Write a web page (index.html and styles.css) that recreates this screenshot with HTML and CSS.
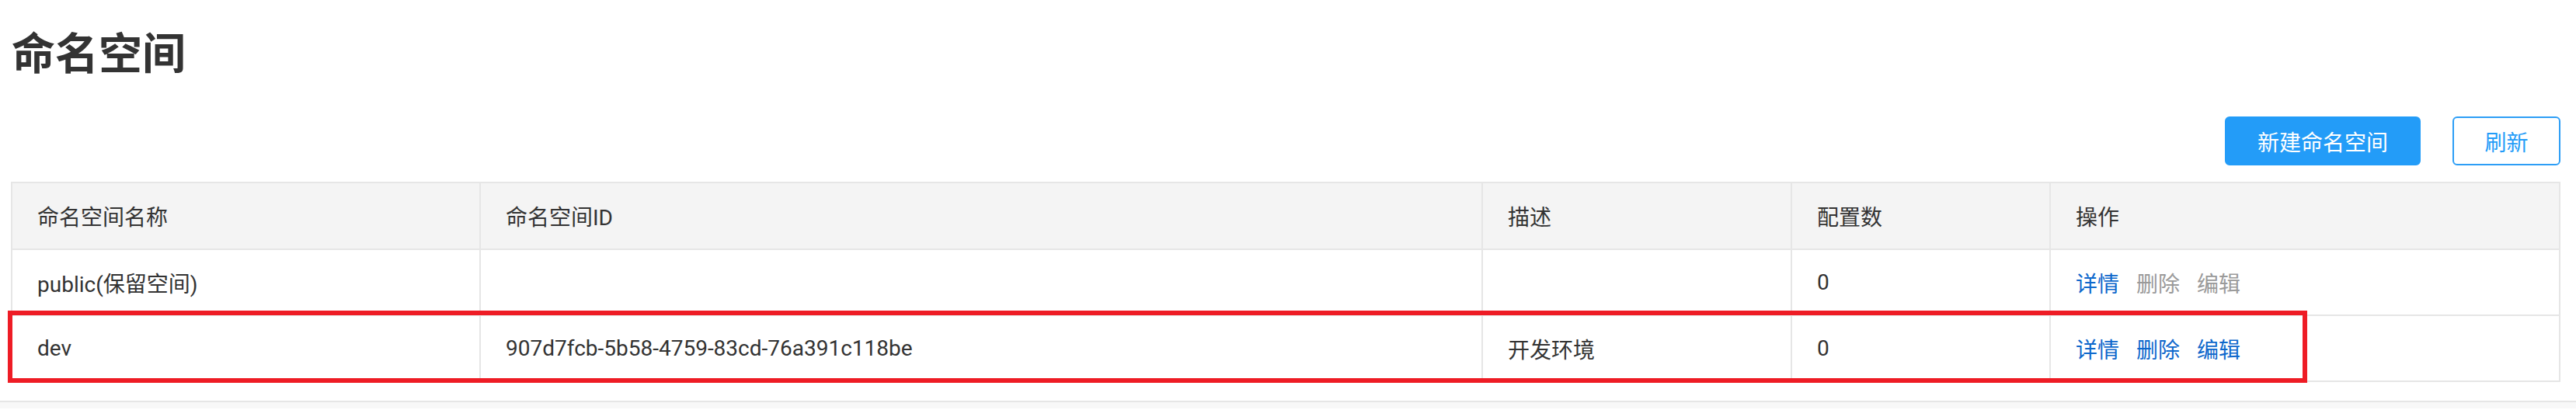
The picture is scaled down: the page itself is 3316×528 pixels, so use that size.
FILE: index.html
```html
<!DOCTYPE html>
<html lang="zh-CN">
<head>
<meta charset="utf-8">
<title>命名空间</title>
<link rel="stylesheet" href="styles.css">
</head>
<body>
<div class="page">
  <h1 class="title">命名空间</h1>
  <div class="toolbar">
    <button class="btn btn-primary">新建命名空间</button>
    <button class="btn btn-outline">刷新</button>
  </div>
  <div class="table-wrap">
    <table class="ns-table">
      <colgroup>
        <col class="c1"><col class="c2"><col class="c3"><col class="c4"><col class="c5">
      </colgroup>
      <thead>
        <tr><th>命名空间名称</th><th>命名空间ID</th><th>描述</th><th>配置数</th><th>操作</th></tr>
      </thead>
      <tbody>
        <tr>
          <td>public(保留空间)</td><td></td><td></td><td>0</td>
          <td><div class="ops"><a class="link">详情</a><a class="link disabled">删除</a><a class="link disabled">编辑</a></div></td>
        </tr>
        <tr>
          <td>dev</td><td>907d7fcb-5b58-4759-83cd-76a391c118be</td><td>开发环境</td><td>0</td>
          <td><div class="ops"><a class="link">详情</a><a class="link">删除</a><a class="link">编辑</a></div></td>
        </tr>
      </tbody>
    </table>
    <div class="highlight"></div>
  </div>
</div>
<div class="footer"></div>
</body>
</html>
```
FILE: styles.css
```css
html, body {
  margin: 0;
  padding: 0;
  background: #ffffff;
}
body {
  font-family: Roboto, "Noto Sans CJK SC", sans-serif;
  color: #333333;
}
.page {
  padding: 0 20px 0 14px;
}
.title {
  margin: 37px 0 0 1px;
  font-family: "Noto Sans CJK SC", sans-serif;
  font-size: 56px;
  line-height: 56px;
  font-weight: 700;
  color: #333333;
}
.toolbar {
  display: flex;
  justify-content: flex-end;
  gap: 41px;
  margin-top: 57px;
}
.btn {
  height: 63px;
  font-family: "Noto Sans CJK SC", sans-serif;
  font-size: 28px;
  line-height: 1;
  border-radius: 6px;
  padding: 0;
  cursor: pointer;
}
.btn-primary {
  width: 252px;
  background: #239cf8;
  border: 2px solid #239cf8;
  color: #ffffff;
}
.btn-outline {
  width: 139px;
  background: #ffffff;
  border: 2px solid #2d9ef6;
  color: #239cf8;
}
.table-wrap {
  position: relative;
  margin-top: 21px;
}
.ns-table {
  width: 100%;
  border-collapse: collapse;
  table-layout: fixed;
  font-size: 28px;
}
.c1 { width: 603px; }
.c2 { width: 1290px; }
.c3 { width: 398px; }
.c4 { width: 333px; }
.c5 { width: auto; }
.ns-table th,
.ns-table td {
  border: 2px solid #e6e6e6;
  padding: 0 0 0 32px;
  text-align: left;
  vertical-align: middle;
  font-weight: 400;
  color: #333333;
  white-space: nowrap;
}
.ns-table th {
  height: 84px;
  background: #f4f4f4;
}
.ns-table td {
  height: 83px;
}
.ops {
  display: flex;
  gap: 22px;
}
.link {
  font-family: "Noto Sans CJK SC", sans-serif;
  color: #0e68cc;
  cursor: pointer;
}
.link.disabled {
  color: #9a9a9a;
}
.highlight {
  position: absolute;
  left: -4px;
  top: 166px;
  width: 2960px;
  height: 93px;
  box-sizing: border-box;
  border: 6px solid #ee1c25;
  pointer-events: none;
}
.footer {
  margin-top: 24px;
  border-top: 2px solid #e6e6e6;
  background: #f8f8f8;
  height: 8px;
}
```
